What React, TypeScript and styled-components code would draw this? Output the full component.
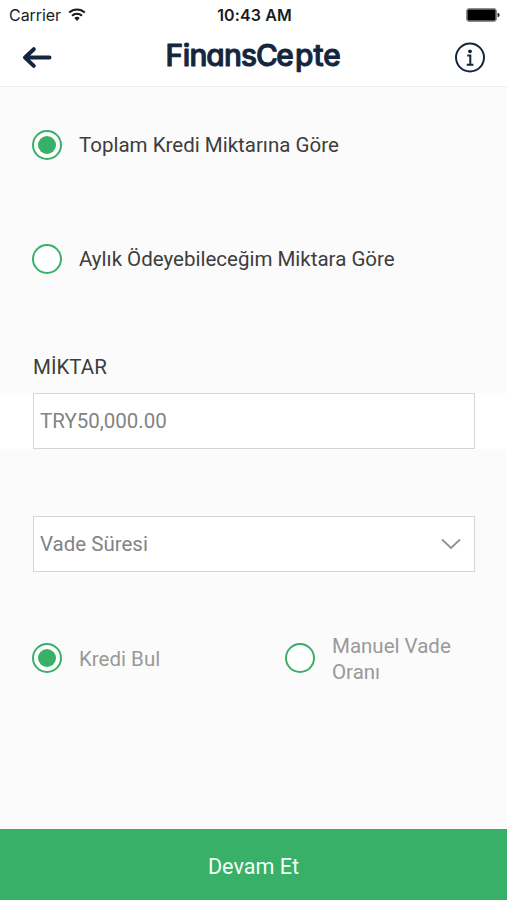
import React, { useState } from "react";
import styled, { createGlobalStyle } from "styled-components";

const navy = "#14263d";
const green = "#38b068";

const GlobalStyle = createGlobalStyle`
  * { box-sizing: border-box; }
  body { margin: 0; background: #fbfbfb; }
`;

const Screen = styled.div`
  display: flex;
  flex-direction: column;
  width: 507px;
  height: 900px;
  overflow: hidden;
  background: #fbfbfb;
  font-family: Roboto, "Liberation Sans", sans-serif;
  color: #3d3d3d;
`;

const Top = styled.header`
  height: 87px;
  background: #fff;
  border-bottom: 1px solid #ececec;
`;

const StatusBar = styled.div`
  display: grid;
  grid-template-columns: 1fr auto 1fr;
  align-items: center;
  height: 29px;
  padding: 0 7px 0 9px;
  font-family: Inter, "Liberation Sans", sans-serif;
  color: #1c1c1c;
`;

const Carrier = styled.div`
  display: flex;
  align-items: center;
  gap: 7px;
  font-size: 16px;
  letter-spacing: -0.05px;
`;

const Clock = styled.div`
  font-size: 16px;
  font-weight: 600;
  letter-spacing: 0.1px;
`;

const BatterySlot = styled.div`
  display: flex;
  justify-content: flex-end;
`;

const NavBar = styled.div`
  display: flex;
  align-items: flex-start;
  justify-content: space-between;
  height: 57px;
  padding: 0 22px 0 20px;
`;

const IconButton = styled.button`
  display: flex;
  align-items: center;
  width: 32px;
  height: 57px;
  padding: 0;
  border: 0;
  background: none;
`;

const Wordmark = styled.svg`
  display: block;
  font-family: Inter, sans-serif;
  font-weight: 500;
  font-feature-settings: "cv11" 1;
`;

const Form = styled.main`
  flex: 1;
  display: flex;
  flex-direction: column;
`;

const Modes = styled.div`
  display: flex;
  flex-direction: column;
  gap: 83px;
  padding: 42px 32px 0;
`;

const Option = styled.button<{ $muted?: boolean }>`
  display: flex;
  align-items: center;
  gap: 17px;
  height: 31px;
  padding: 0;
  border: 0;
  background: none;
  font: inherit;
  font-size: 20.5px;
  line-height: 26px;
  text-align: left;
  white-space: pre-line;
  color: ${(p) => (p.$muted ? "#999" : "#3d3d3d")};
`;

const Ring = styled.span`
  flex: none;
  display: grid;
  place-items: center;
  width: 30px;
  height: 30px;
  border: 2px solid ${green};
  border-radius: 50%;
  background: #fff;
`;

const Dot = styled.span`
  width: 18px;
  height: 18px;
  border-radius: 50%;
  background: ${green};
`;

const OptionText = styled.span<{ $low?: boolean }>`
  padding-top: ${(p) => (p.$low ? 2 : 0)}px;
`;

const FieldLabel = styled.label`
  margin: 81px 33px 0;
  height: 25px;
  font-size: 20.5px;
  line-height: 25px;
`;

const AmountBand = styled.div`
  margin-top: 13px;
  padding: 0 32px 0 33px;
  height: 56px;
  background: #fff;
`;

const Amount = styled.input`
  display: block;
  width: 100%;
  height: 56px;
  padding: 0 6px;
  border: 1px solid #d5d5d5;
  border-radius: 0;
  background: #fff;
  outline: 0;
  font: inherit;
  font-size: 20.5px;
  color: #838383;
`;

const TermSelect = styled.button`
  display: flex;
  align-items: center;
  justify-content: space-between;
  margin: 67px 32px 0 33px;
  height: 56px;
  padding: 0 13px 0 6px;
  border: 1px solid #d5d5d5;
  background: #fff;
  font: inherit;
  font-size: 20.5px;
  color: #838383;
`;

const Methods = styled.div`
  display: grid;
  grid-template-columns: 253px auto;
  margin-top: 70px;
  padding-left: 32px;
`;

const Submit = styled.button`
  height: 71px;
  padding: 3px 0 0;
  border: 0;
  background: ${green};
  color: #f4fff8;
  font: inherit;
  font-size: 21.6px;
`;

interface RadioProps {
  label: string;
  checked: boolean;
  muted?: boolean;
  onSelect: () => void;
}

function Radio({ label, checked, muted, onSelect }: RadioProps) {
  return (
    <Option type="button" role="radio" aria-checked={checked} $muted={muted} onClick={onSelect}>
      <Ring>{checked && <Dot />}</Ring>
      <OptionText $low={muted}>{label}</OptionText>
    </Option>
  );
}

function WifiIcon() {
  return (
    <svg width="18" height="14" viewBox="0 0 18 14" fill="none" stroke="#1c1c1c">
      <path d="M1.2 4.6a11.2 11.2 0 0 1 15.6 0" strokeWidth="2.1" />
      <path d="M4 7.7a7.2 7.2 0 0 1 10 0" strokeWidth="2.1" />
      <path d="M6.3 10.1a3.9 3.9 0 0 1 5.4 0L9 12.9Z" fill="#1c1c1c" stroke="none" />
    </svg>
  );
}

function BatteryIcon() {
  return (
    <svg width="34" height="14" viewBox="0 0 34 14">
      <rect x="0.6" y="0.6" width="29.8" height="12.8" rx="2.4" fill="#777" stroke="#888" strokeWidth="1" />
      <rect x="1.7" y="1.7" width="27.6" height="10.6" rx="1" fill="#000" />
      <path d="M31.5 4.8q2.2.5 2.2 2.2t-2.2 2.2Z" fill="#222" />
    </svg>
  );
}

export default function App() {
  const [mode, setMode] = useState(0);
  const [method, setMethod] = useState(0);
  const [amount, setAmount] = useState("TRY50,000.00");

  return (
    <>
      <GlobalStyle />
      <Screen>
        <Top>
          <StatusBar>
            <Carrier>
              Carrier
              <WifiIcon />
            </Carrier>
            <Clock>10:43 AM</Clock>
            <BatterySlot>
              <BatteryIcon />
            </BatterySlot>
          </StatusBar>
          <NavBar>
            <IconButton aria-label="Geri">
              <svg width="32" height="24" viewBox="0 0 32 24" fill="none" stroke={navy} strokeWidth="4" strokeLinecap="round" strokeLinejoin="round">
                <path d="M29.5 11.5H5M13.8 3.2 5 11.5l8.8 8.4" />
              </svg>
            </IconButton>
            <Wordmark width="180" height="50" viewBox="0 0 180 50" role="img" aria-label="FinansCepte">
              <text
                x="2.4 19.8 26.6 43.2 60.9 78 93 113.2 132 150.6 160.2"
                y="36.6"
                fontSize="29.8"
                fill={navy}
                stroke={navy}
                strokeWidth="1"
                strokeLinejoin="round"
              >
                FinansCepte
              </text>
            </Wordmark>
            <IconButton aria-label="Bilgi">
              <svg width="32" height="32" viewBox="0 0 32 32" fill="none" stroke={navy}>
                <circle cx="17" cy="15.5" r="14" strokeWidth="2" />
                <circle cx="17" cy="9.3" r="1.9" fill={navy} stroke="none" />
                <path d="M14.3 13.5h3v9M13.8 22.7h6.6" strokeWidth="2" />
              </svg>
            </IconButton>
          </NavBar>
        </Top>

        <Form>
          <Modes role="radiogroup">
            <Radio label="Toplam Kredi Miktarına Göre" checked={mode === 0} onSelect={() => setMode(0)} />
            <Radio label="Aylık Ödeyebileceğim Miktara Göre" checked={mode === 1} onSelect={() => setMode(1)} />
          </Modes>

          <FieldLabel htmlFor="amount">MİKTAR</FieldLabel>
          <AmountBand>
            <Amount id="amount" value={amount} onChange={(e) => setAmount(e.target.value)} />
          </AmountBand>

          <TermSelect type="button">
            Vade Süresi
            <svg width="20" height="12" viewBox="0 0 20 12" fill="none" stroke="#909090" strokeWidth="1.8">
              <path d="M1 1.5 10 10l9-8.5" />
            </svg>
          </TermSelect>

          <Methods role="radiogroup">
            <Radio label="Kredi Bul" muted checked={method === 0} onSelect={() => setMethod(0)} />
            <Radio label={"Manuel Vade\nOranı"} muted checked={method === 1} onSelect={() => setMethod(1)} />
          </Methods>
        </Form>

        <Submit type="button">Devam Et</Submit>
      </Screen>
    </>
  );
}
